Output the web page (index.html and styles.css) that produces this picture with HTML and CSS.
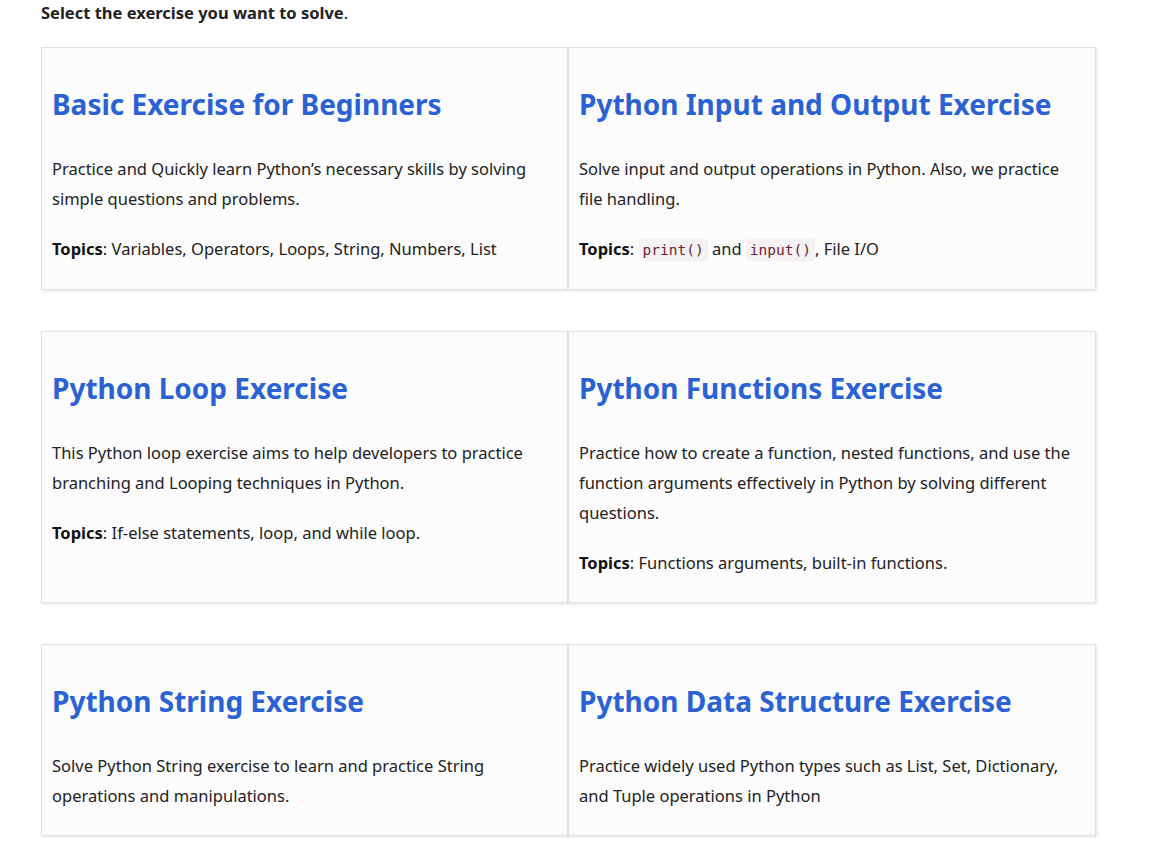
FILE: index.html
```html
<!DOCTYPE html>
<html lang="en">
<head>
<meta charset="utf-8">
<title>Python Exercises</title>
<link rel="stylesheet" href="styles.css">
</head>
<body>
<div class="page">
  <p class="intro"><strong>Select the exercise you want to solve</strong>.</p>

  <div class="row">
    <div class="card">
      <h2 class="title">Basic Exercise for Beginners</h2>
      <p class="text">Practice and Quickly learn Python’s necessary skills by solving simple questions and problems.</p>
      <p class="text"><strong>Topics</strong>: Variables, Operators, Loops, String, Numbers, List</p>
    </div>
    <div class="card">
      <h2 class="title">Python Input and Output Exercise</h2>
      <p class="text">Solve input and output operations in Python. Also, we practice file handling.</p>
      <p class="text"><strong>Topics</strong>: <code class="code">print()</code> and <code class="code">input()</code>, File I/O</p>
    </div>
  </div>

  <div class="row">
    <div class="card">
      <h2 class="title">Python Loop Exercise</h2>
      <p class="text">This Python loop exercise aims to help developers to practice branching and Looping techniques in Python.</p>
      <p class="text"><strong>Topics</strong>: If-else statements, loop, and while loop.</p>
    </div>
    <div class="card">
      <h2 class="title">Python Functions Exercise</h2>
      <p class="text">Practice how to create a function, nested functions, and use the function arguments effectively in Python by solving different questions.</p>
      <p class="text"><strong>Topics</strong>: Functions arguments, built-in functions.</p>
    </div>
  </div>

  <div class="row">
    <div class="card">
      <h2 class="title">Python String Exercise</h2>
      <p class="text">Solve Python String exercise to learn and practice String operations and manipulations.</p>
    </div>
    <div class="card">
      <h2 class="title">Python Data Structure Exercise</h2>
      <p class="text">Practice widely used Python types such as List, Set, Dictionary, and Tuple operations in Python</p>
    </div>
  </div>
</div>
</body>
</html>
```

FILE: styles.css
```css
html, body {
  margin: 0;
  padding: 0;
  background: #ffffff;
}

body {
  font-family: "Noto Sans", "Open Sans", sans-serif;
  color: #222222;
}

.page {
  width: 1055px;
  padding: 0 0 0 41px;
}

.intro {
  margin: 0 0 21px 0;
  font-size: 16.5px;
  line-height: 26px;
  color: #222222;
}

.intro strong {
  font-weight: 700;
}

.row {
  display: grid;
  grid-template-columns: 527px 528px;
  margin-bottom: 41px;
}

.card {
  background: #fcfcfc;
  border: 1px solid #e2e2e2;
  box-shadow: 1px 1px 3px rgba(0, 0, 0, 0.12);
  padding: 39px 11px 4px 10px;
}

.title {
  margin: 0 0 33px 0;
  font-size: 28px;
  line-height: 34px;
  font-weight: 700;
  color: #2a62d4;
}

.text {
  margin: 0 0 20px 0;
  font-size: 16.5px;
  line-height: 30px;
  color: #222222;
}

.text strong {
  font-weight: 700;
  color: #111111;
}

.code {
  font-family: "DejaVu Sans Mono", "Liberation Mono", monospace;
  font-size: 14.5px;
  color: #6b1d34;
  background: #f6f1f2;
  padding: 3px 4px;
  border-radius: 3px;
}
```
